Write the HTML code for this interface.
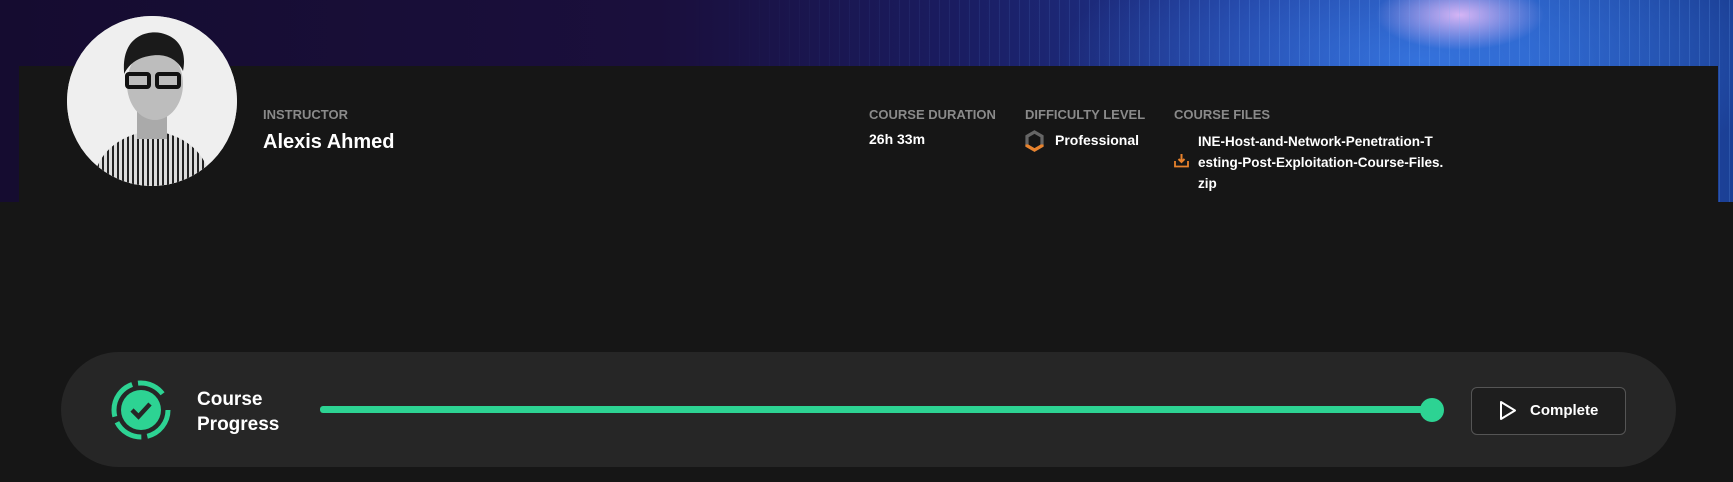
<!DOCTYPE html>
<html><head><meta charset="utf-8"><style>
*{margin:0;padding:0;box-sizing:border-box}
html,body{width:1733px;height:482px;overflow:hidden;background:#161616;font-family:"Liberation Sans",Arial,sans-serif}
.banner{position:absolute;left:0;top:0;width:1733px;height:202px;overflow:hidden;
background:
radial-gradient(ellipse 120px 50px at 1460px 15px,rgba(255,200,255,.8),rgba(200,150,255,0) 70%),
radial-gradient(ellipse 480px 180px at 1420px 60px,rgba(60,130,240,.7),rgba(40,80,220,0) 75%),
linear-gradient(90deg,#150c30 0%,#1a0f3c 38%,#1a1c60 55%,#1f3a98 72%,#2656b8 88%,#1b3f95 100%)}
.banner .lines{position:absolute;inset:0;
background:repeating-linear-gradient(90deg,rgba(120,180,255,0) 0 9px,rgba(120,180,255,.18) 9px 10px);
-webkit-mask-image:linear-gradient(90deg,transparent 40%,#000 75%);mask-image:linear-gradient(90deg,transparent 40%,#000 75%)}
.panel{position:absolute;left:19px;top:66px;width:1699px;height:136px;background:#161616}
.avatar{position:absolute;left:67px;top:16px;width:170px;height:170px;border-radius:50%;overflow:hidden;background:#f2f2f2}
.lbl{position:absolute;color:#8a8a8a;font-size:13px;font-weight:bold}
.val{position:absolute;color:#fff;font-weight:bold}
.card{position:absolute;left:61px;top:352px;width:1615px;height:115px;border-radius:58px;background:#262626}
.track{position:absolute;left:320px;top:406px;width:1112px;height:7px;background:#2dd393;border-radius:3px}
.knob{position:absolute;left:1420px;top:398px;width:24px;height:24px;border-radius:50%;background:#2dd393}
.btn{position:absolute;left:1471px;top:387px;width:155px;height:48px;border:1px solid #555;border-radius:6px;background:#1e1e1e}
</style></head><body>
<div class="banner"><div class="lines"></div></div>
<div class="panel"></div>
<div class="avatar">
<svg width="170" height="170" viewBox="0 0 170 170">
<defs><pattern id="st" width="5" height="5" patternUnits="userSpaceOnUse"><rect width="5" height="5" fill="#ddd"/><rect width="2" height="5" fill="#222"/></pattern></defs>
<rect width="170" height="170" fill="#efefef"/>
<path d="M25 170 C30 130 60 118 85 114 C110 118 140 130 145 170Z" fill="url(#st)"/>
<rect x="70" y="85" width="30" height="38" fill="#aaa"/>
<ellipse cx="88" cy="68" rx="28" ry="36" fill="#bdbdbd"/>
<path d="M57 55 C55 22 78 14 94 17 C112 21 120 35 116 55 C110 42 97 37 82 40 C70 42 62 48 57 58Z" fill="#1a1a1a"/>
<rect x="60" y="58" width="22" height="13" rx="2" fill="none" stroke="#111" stroke-width="4"/>
<rect x="90" y="58" width="22" height="13" rx="2" fill="none" stroke="#111" stroke-width="4"/>
</svg></div>
<div class="lbl" style="left:263px;top:107px">INSTRUCTOR</div>
<div class="val" style="left:263px;top:131px;font-size:20px">Alexis Ahmed</div>
<div class="lbl" style="left:869px;top:107px">COURSE DURATION</div>
<div class="val" style="left:869px;top:131px;font-size:14px">26h 33m</div>
<div class="lbl" style="left:1025px;top:107px">DIFFICULTY LEVEL</div>
<svg style="position:absolute;left:1025px;top:130px" width="19" height="22" viewBox="0 0 19 22">
<path d="M9.5 2 L17 6.3 V15.7 L9.5 20 L2 15.7 V6.3Z" fill="none" stroke="#666" stroke-width="3.2"/>
<path d="M2 14.5 V15.7 L9.5 20 L17 15.7 V14.5" fill="none" stroke="#e8822c" stroke-width="3.2"/>
</svg>
<div class="val" style="left:1055px;top:132px;font-size:14px">Professional</div>
<div class="lbl" style="left:1174px;top:107px">COURSE FILES</div>
<svg style="position:absolute;left:1174px;top:153px" width="15" height="15" viewBox="0 0 15 15">
<path d="M1 8 V13.5 H14 V8" fill="none" stroke="#e8822c" stroke-width="1.8"/>
<path d="M7.5 1 V9 M4.5 6 L7.5 9 L10.5 6" fill="none" stroke="#e8822c" stroke-width="2"/>
</svg>
<div class="val" style="left:1198px;top:131px;font-size:13.5px;line-height:21px;width:250px">INE-Host-and-Network-Penetration-T<br>esting-Post-Exploitation-Course-Files.<br>zip</div>
<div class="card"></div>
<svg style="position:absolute;left:110px;top:379px" width="62" height="62" viewBox="0 0 62 62">
<circle cx="31" cy="31" r="27" fill="none" stroke="#2dd393" stroke-width="5" stroke-dasharray="36 6 30 6 40 6 28 18"/>
<circle cx="31" cy="31" r="20" fill="#2dd393"/>
<path d="M22 31 L28.5 37.5 L40 25" fill="none" stroke="#262626" stroke-width="4.5"/>
</svg>
<div class="val" style="left:197px;top:387px;font-size:19px;line-height:25px">Course<br>Progress</div>
<div class="track"></div>
<div class="knob"></div>
<div class="btn"></div>
<svg style="position:absolute;left:1499px;top:400px" width="18" height="21" viewBox="0 0 18 21">
<path d="M2 2 L16 10.5 L2 19Z" fill="none" stroke="#fff" stroke-width="2" stroke-linejoin="round"/>
</svg>
<div class="val" style="left:1530px;top:402px;font-size:15px">Complete</div>
</body></html>
